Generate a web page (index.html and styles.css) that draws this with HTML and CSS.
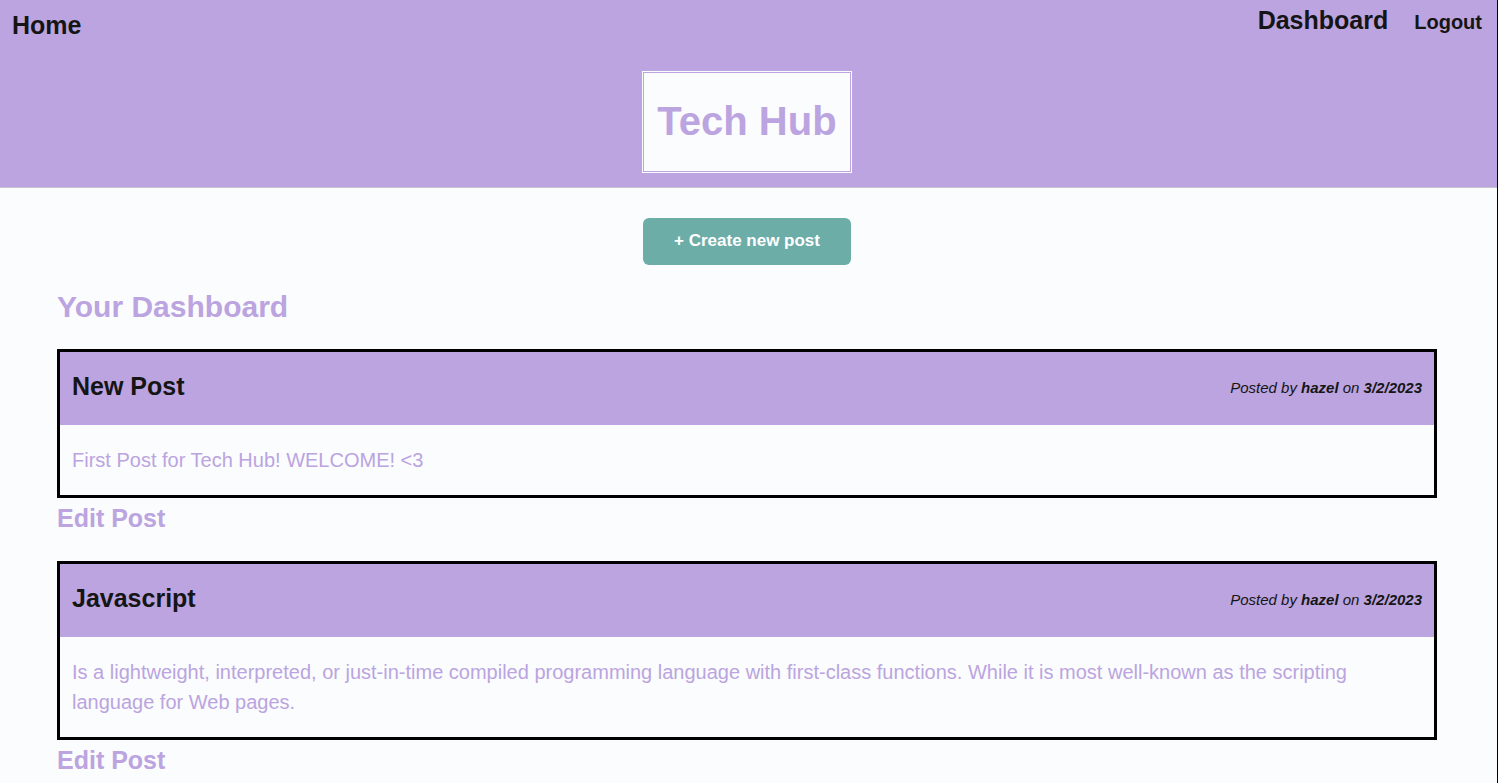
FILE: index.html
```html
<!DOCTYPE html>
<html lang="en">
<head>
  <meta charset="utf-8">
  <meta name="viewport" content="width=device-width, initial-scale=1">
  <title>Tech Hub</title>
  <link rel="stylesheet" href="styles.css">
</head>
<body>
  <header class="site-header">
    <nav class="site-nav">
      <a class="nav-home" href="#home">Home</a>
      <div class="nav-links">
        <a href="#dashboard">Dashboard</a>
        <button class="logout" type="button">Logout</button>
      </div>
    </nav>
    <h1 class="site-title">Tech Hub</h1>
  </header>
  <main class="dashboard">
    <button class="create-post" type="button">+ Create new post</button>
    <h2 class="dashboard-title">Your Dashboard</h2>
    <section class="post">
      <article class="card">
        <header class="card-header">
          <h3 class="card-title">New Post</h3>
          <p class="card-meta">Posted by <strong>hazel</strong> on <strong>3/2/2023</strong></p>
        </header>
        <p class="card-body">First Post for Tech Hub! WELCOME! &lt;3</p>
      </article>
      <a class="edit-link" href="#edit-1">Edit Post</a>
    </section>
    <section class="post">
      <article class="card">
        <header class="card-header">
          <h3 class="card-title">Javascript</h3>
          <p class="card-meta">Posted by <strong>hazel</strong> on <strong>3/2/2023</strong></p>
        </header>
        <p class="card-body">Is a lightweight, interpreted, or just-in-time compiled programming language with first-class functions. While it is most well-known as the scripting language for Web pages.</p>
      </article>
      <a class="edit-link" href="#edit-2">Edit Post</a>
    </section>
  </main>
</body>
</html>
```

FILE: styles.css
```css
:root {
  --purple: #bba4df;
  --paper: #fafcfe;
  --ink: #151515;
  --teal: #6cada8;
}

* {
  box-sizing: border-box;
}

html {
  scrollbar-width: none;
}

body {
  margin: 0;
  min-height: 100vh;
  border-right: 1px solid #000;
  background: var(--paper);
  color: var(--purple);
  font-family: "Liberation Sans", Arial, sans-serif;
  font-size: 20px;
  line-height: 30px;
}

h1, h2, h3, p {
  margin: 0;
}

a {
  color: inherit;
  text-decoration: none;
}

button {
  border: 0;
  font-family: inherit;
  font-weight: bold;
  cursor: pointer;
}

.site-header {
  display: flex;
  flex-direction: column;
  align-items: center;
  gap: 27px;
  padding: 0 15px 14px 12px;
  border-bottom: 1px solid #c8c3d0;
  background: var(--purple);
}

.site-nav {
  display: flex;
  justify-content: space-between;
  align-items: flex-start;
  width: 100%;
  color: var(--ink);
  font-size: 25px;
  font-weight: bold;
  line-height: 38px;
}

.nav-home {
  padding-top: 6px;
}

.nav-links {
  display: flex;
  align-items: baseline;
  gap: 26px;
  padding-top: 1px;
}

.logout {
  padding: 0;
  background: none;
  color: inherit;
  font-size: 20px;
  line-height: 30px;
}

.site-title {
  padding: 17px 12px 19px;
  border: 3px double var(--paper);
  background: var(--paper);
  background-clip: padding-box;
  font-size: 40px;
  line-height: 60px;
}

.dashboard {
  display: flex;
  flex-direction: column;
  padding: 30px 60px 0 57px;
}

.create-post {
  align-self: center;
  padding: 10px 31px 12px;
  border-radius: 6px;
  background: var(--teal);
  color: #fff;
  font-size: 17px;
  line-height: 25px;
}

.dashboard-title {
  margin: 19px 0 20px;
  font-size: 30px;
  line-height: 45px;
}

.post {
  margin-bottom: 24px;
}

.card {
  margin-bottom: 1px;
  border: 3px solid #000;
}

.card-header {
  display: flex;
  justify-content: space-between;
  align-items: center;
  padding: 15px 12px 20px;
  background: var(--purple);
  color: var(--ink);
}

.card-title {
  font-size: 25px;
  line-height: 38px;
}

.card-meta {
  padding-top: 4px;
  font-size: 15px;
  font-style: italic;
}

.card-body {
  padding: 20px 12px;
}

.edit-link {
  display: block;
  width: fit-content;
  font-size: 25px;
  font-weight: bold;
  line-height: 38px;
}
```
